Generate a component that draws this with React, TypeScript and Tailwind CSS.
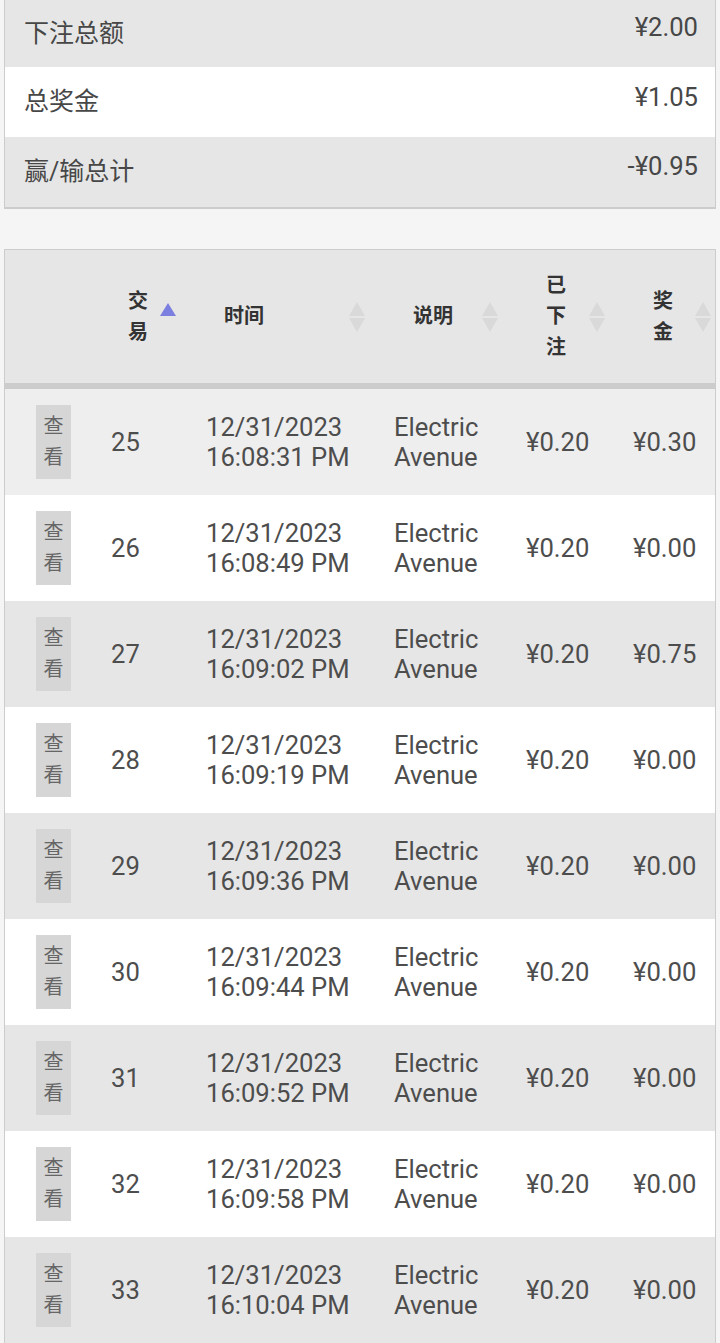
import React from 'react';

const summary = [
  { label: '下注总额', value: '¥2.00', bg: 'bg-[#e6e6e6]', h: 'h-[67px]', pt: 'pt-[12px]' },
  { label: '总奖金', value: '¥1.05', bg: 'bg-white', h: 'h-[70px]', pt: 'pt-[15px]' },
  { label: '赢/输总计', value: '-¥0.95', bg: 'bg-[#e6e6e6]', h: 'h-[70px]', pt: 'pt-[14px]' },
];

const rows = [
  { id: 25, time: '16:08:31 PM', prize: '¥0.30' },
  { id: 26, time: '16:08:49 PM', prize: '¥0.00' },
  { id: 27, time: '16:09:02 PM', prize: '¥0.75' },
  { id: 28, time: '16:09:19 PM', prize: '¥0.00' },
  { id: 29, time: '16:09:36 PM', prize: '¥0.00' },
  { id: 30, time: '16:09:44 PM', prize: '¥0.00' },
  { id: 31, time: '16:09:52 PM', prize: '¥0.00' },
  { id: 32, time: '16:09:58 PM', prize: '¥0.00' },
  { id: 33, time: '16:10:04 PM', prize: '¥0.00' },
];

const headers = [
  { lines: ['交', '易'], pl: 'pl-[33px]', active: true, right: 'right-[14px]' },
  { lines: ['时间'], pl: 'pl-[34px]', active: false, right: 'right-[12px]' },
  { lines: ['说明'], pl: 'pl-[35px]', active: false, right: 'right-[11px]' },
  { lines: ['已', '下', '注'], pl: 'pl-[36px]', active: false, right: 'right-[11px]' },
  { lines: ['奖', '金'], pl: 'pl-[36px]', active: false, right: 'right-[3px]' },
];

const SortIcon: React.FC<{ active: boolean }> = ({ active }) =>
  active ? (
    <svg width="16" height="32" viewBox="0 0 16 32">
      <polygon points="8,2 16,15 0,15" fill="#7b7fe0" />
    </svg>
  ) : (
    <svg width="18" height="32" viewBox="0 0 18 32">
      <polygon points="9,1 17,15 1,15" fill="#d9d9d9" />
      <polygon points="1,17 17,17 9,31" fill="#d9d9d9" />
    </svg>
  );

const cols = 'grid grid-cols-[90px_95px_188px_132px_107px_98px]';

export default function App() {
  return (
    <div className="min-h-screen bg-[#f5f5f5] px-[4px] pb-4 font-[Roboto,'Noto_Sans_CJK_SC',sans-serif] text-[#474747]">
      <div className="border border-t-0 border-b-2 border-[#cccccc]">
        {summary.map((s) => (
          <div key={s.label} className={`flex justify-between pl-[19px] pr-[17px] ${s.bg} ${s.h}`}>
            <span className="self-center text-[25px] leading-[30px]">{s.label}</span>
            <span className={`self-start text-[25.6px] leading-[30px] ${s.pt}`}>{s.value}</span>
          </div>
        ))}
      </div>

      <div className="mt-[40px] border border-[#cccccc] border-b-0">
        <div className={`${cols} h-[139px] bg-[#e6e6e6] border-b-[6px] border-[#cccccc]`}>
          <div />
          {headers.map((h, i) => (
            <div key={i} className={`relative flex items-center ${h.pl}`}>
              <div className="text-[20px] font-bold leading-[31px] text-[#333]">
                {h.lines.map((l) => (
                  <div key={l}>{l}</div>
                ))}
              </div>
              <div className={`absolute top-[51px] ${h.right}`}>
                <SortIcon active={h.active} />
              </div>
            </div>
          ))}
        </div>

        {rows.map((r, i) => (
          <div
            key={r.id}
            className={`${cols} h-[106px] text-[25.6px] leading-[30px] text-[#4d4d4d] ${
              i === 0 ? 'bg-[#eeeeee]' : i % 2 === 0 ? 'bg-[#e6e6e6]' : 'bg-white'
            }`}
          >
            <div className="flex items-center pl-[31px]">
              <div className="flex h-[74px] w-[35px] flex-col items-center justify-center bg-[#d6d6d6] text-[20px] leading-[31px] text-[#666]">
                <span>查</span>
                <span>看</span>
              </div>
            </div>
            <div className="flex items-center pl-4">{r.id}</div>
            <div className="flex flex-col justify-center pl-4">
              <span>12/31/2023</span>
              <span>{r.time}</span>
            </div>
            <div className="flex flex-col justify-center pl-4">
              <span>Electric</span>
              <span>Avenue</span>
            </div>
            <div className="flex items-center pl-4">¥0.20</div>
            <div className="flex items-center pl-4">{r.prize}</div>
          </div>
        ))}
      </div>
    </div>
  );
}
